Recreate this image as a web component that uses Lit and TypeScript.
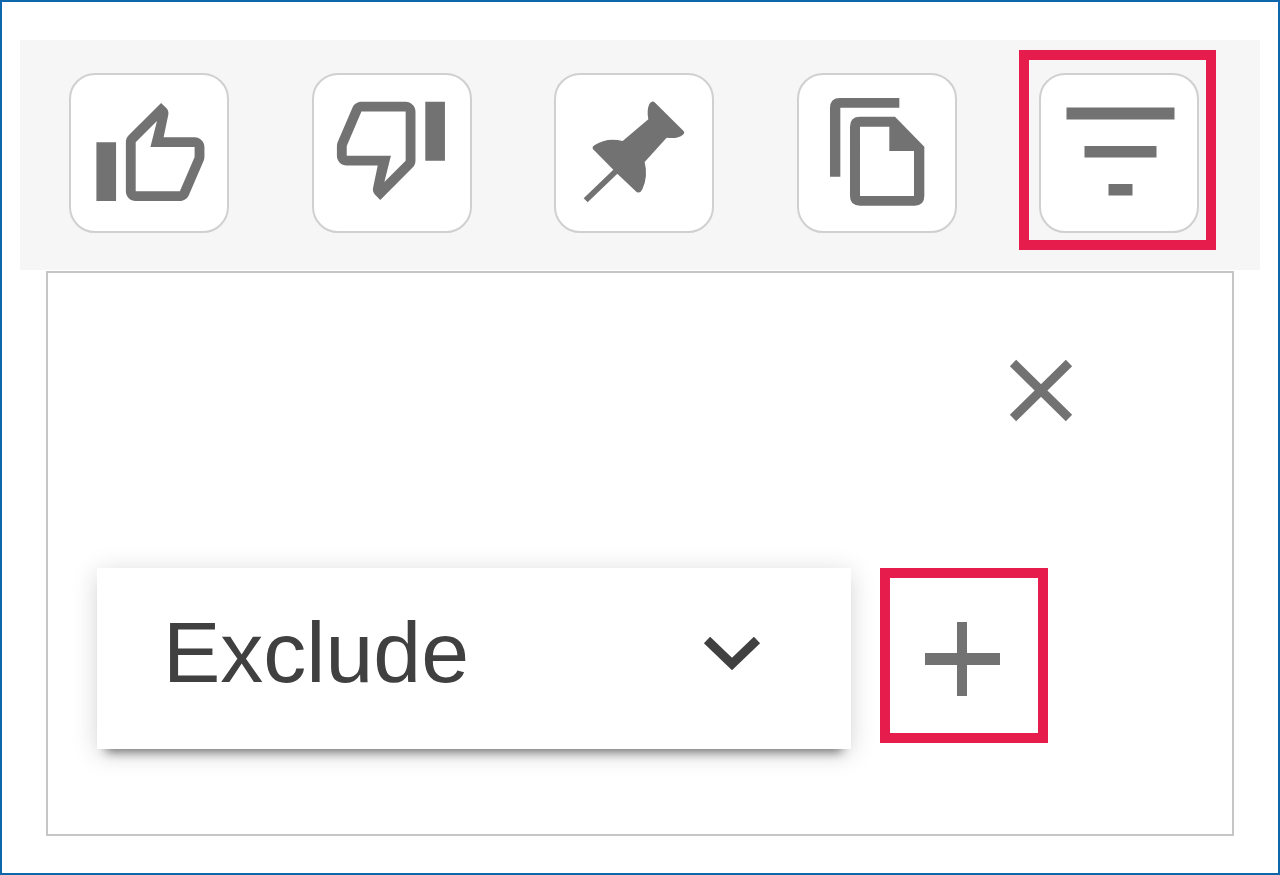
import { LitElement, html, css, svg } from "lit";
import { customElement, state } from "lit/decorators.js";

const thumbUp = svg`
  <g transform="translate(22.500 25) scale(4.91)">
    <path d="M9 21h9c.83 0 1.54-.5 1.84-1.22l3.02-7.05c.09-.23.14-.47.14-.73v-2c0-1.1-.9-2-2-2h-6.31l.95-4.57.03-.32c0-.41-.17-.79-.44-1.06L14.17 1 7.58 7.59C7.22 7.95 7 8.45 7 9v10c0 1.1.9 2 2 2zM9 9l4.34-4.34L12 10h9v2l-3 7H9V9zM1 9h4v12H1z"/>
  </g>`;

const thumbDown = svg`
  <g transform="translate(20 14) scale(4.91)">
    <path d="M15 3H6c-.83 0-1.54.5-1.84 1.22l-3.02 7.05c-.09.23-.14.47-.14.73v2c0 1.1.9 2 2 2h6.31l-.95 4.57-.03.32c0 .41.17.79.44 1.06L9.83 23l6.59-6.59c.36-.36.58-.86.58-1.41V5c0-1.1-.9-2-2-2zm0 12l-4.34 4.34L12 14H3v-2l3-7h9v10zm4-12h4v12h-4z"/>
  </g>`;

const pin = svg`
  <g transform="translate(-14 -13) scale(.3333)">
    <path d="M336 125 Q341 124 346 129 L430 212 Q436 218 429 224 Q412 238 380 233 L314 306 Q325 350 307 388 Q300 403 289 395 L232 341 L143 427 L131 415 L220 329 L158 266 Q156 260 163 256 Q200 231 248 243 L325 178 Q320 152 327 134 Q330 126 336 125Z"/>
  </g>`;

const copy = svg`
  <g transform="translate(-17 -13) scale(.3333)">
    <path d="M358 114V143H181V350H150V144Q150 114 180 114Z"/>
    <path fill-rule="evenodd" d="M240 170H345L433 260V408Q433 437 404 437H240Q210 437 210 408V200Q210 170 240 170ZM240 200V408H402V273H328V200Z"/>
  </g>`;

const filter = svg`
  <path d="M27.500 34.500H135.500V46.500H27.500ZM45.500 73H117.500V84.500H45.500ZM69.500 111H93.500V122.500H69.500Z"/>`;

const actions = [
  { label: "Like", icon: thumbUp, highlighted: false },
  { label: "Dislike", icon: thumbDown, highlighted: false },
  { label: "Pin", icon: pin, highlighted: false },
  { label: "Copy", icon: copy, highlighted: false },
  { label: "Filter", icon: filter, highlighted: true },
];

@customElement("app-root")
export class AppRoot extends LitElement {
  @state() private mode = "Exclude";

  static styles = css`
    :host {
      display: block;
      box-sizing: border-box;
      min-height: 100vh;
      padding: 38px 18px 37px;
      border: 2px solid #0f67ab;
      background: #fff;
      font-family: "Liberation Sans", Arial, sans-serif;
      color: #404040;
    }
    * {
      box-sizing: border-box;
    }
    button {
      margin: 0;
      padding: 0;
      background: #fff;
      color: #727272;
      cursor: pointer;
    }
    svg {
      display: block;
      fill: currentColor;
    }
    .toolbar {
      display: flex;
      justify-content: space-between;
      padding: 33px 61px 37px 49px;
      background: #f6f6f6;
    }
    .action {
      position: relative;
      width: 160px;
      height: 160px;
      border: 2px solid #d0d0d0;
      border-radius: 26px;
    }
    .highlighted::after {
      content: "";
      position: absolute;
      inset: -25px -19px -19px -22px;
      border: 10px solid #e61c4d;
    }
    .panel {
      margin: 1px 26px 0;
      padding: 78px 0 85px;
      border: 2px solid #c6c6c6;
    }
    .head {
      display: flex;
      justify-content: flex-end;
      padding-right: 151px;
    }
    .close {
      width: 80px;
      height: 80px;
      border: 0;
    }
    .row {
      display: flex;
      align-items: flex-start;
      gap: 29px;
      margin-top: 137px;
      padding: 0 184px 0 49px;
    }
    .picker {
      position: relative;
      flex: 1;
      min-width: 0;
      box-shadow:
        0 12px 10px -9px rgba(0, 0, 0, 0.5),
        0 4px 24px rgba(0, 0, 0, 0.16);
    }
    .select {
      display: block;
      width: 100%;
      height: 181px;
      margin: 0;
      padding: 0 150px 14px 66px;
      border: 0;
      border-radius: 0;
      appearance: none;
      background: #fff;
      color: inherit;
      font: 86px "Liberation Sans", Arial, sans-serif;
    }
    .chevron {
      position: absolute;
      top: 66px;
      right: 88px;
      pointer-events: none;
    }
    .add {
      width: 168px;
      height: 175px;
      border: 10px solid #e61c4d;
    }
  `;

  render() {
    return html`
      <div class="toolbar" role="toolbar" aria-label="Actions">
        ${actions.map(
          (a) => html`
            <button class="action ${a.highlighted ? "highlighted" : ""}" aria-label=${a.label}>
              <svg width="156" height="156" viewBox="2 2 156 156" aria-hidden="true">${a.icon}</svg>
            </button>
          `
        )}
      </div>
      <section class="panel" aria-label="Filter">
        <div class="head">
          <button class="close" aria-label="Close">
            <svg width="80" height="80" viewBox="0 0 80 80" aria-hidden="true">
              <path d="M12 12L68 67M68 12L12 67" stroke="currentColor" stroke-width="9"/>
            </svg>
          </button>
        </div>
        <div class="row">
          <div class="picker">
            <select
              class="select"
              aria-label="Filter mode"
              .value=${this.mode}
              @change=${(e: Event) => (this.mode = (e.target as HTMLSelectElement).value)}
            >
              <option>Exclude</option>
            </select>
            <svg class="chevron" width="62" height="40" viewBox="0 0 62 40" aria-hidden="true">
              <path d="M6 6L31 30L56 6" fill="none" stroke="#404040" stroke-width="9"/>
            </svg>
          </div>
          <button class="add" aria-label="Add">
            <svg width="148" height="155" viewBox="0 0 148 155" aria-hidden="true">
              <path d="M35 75H67V44H77V75H110V87H77V118H67V87H35Z"/>
            </svg>
          </button>
        </div>
      </section>
    `;
  }
}
